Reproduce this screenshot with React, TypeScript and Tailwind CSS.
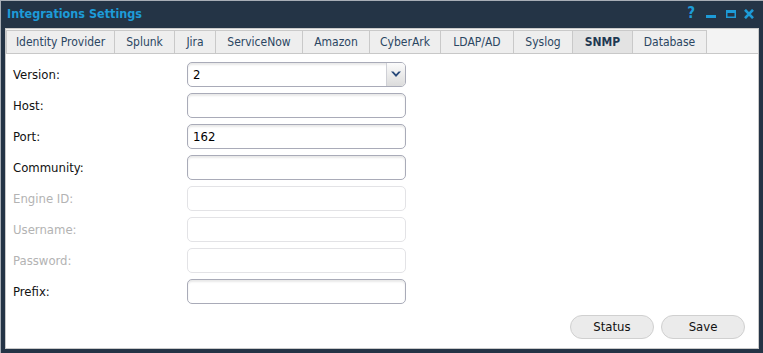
import React from "react";

const font = { fontFamily: '"DejaVu Sans Condensed", "DejaVu Sans", sans-serif' };

const tabs: { name: string; w: string; active?: boolean; last?: boolean }[] = [
  { name: "Identity Provider", w: "w-[108px]" },
  { name: "Splunk", w: "w-[60px]" },
  { name: "Jira", w: "w-[41px]" },
  { name: "ServiceNow", w: "w-[87px]" },
  { name: "Amazon", w: "w-[67px]" },
  { name: "CyberArk", w: "w-[71px]" },
  { name: "LDAP/AD", w: "w-[73px]" },
  { name: "Syslog", w: "w-[59px]" },
  { name: "SNMP", w: "w-[60px]", active: true },
  { name: "Database", w: "w-[75px]", last: true },
];

function Field({ label, value, disabled }: { label: string; value?: string; disabled?: boolean }) {
  return (
    <div className="flex items-center h-[25px]">
      <div className={`w-[174px] text-[13px] ${disabled ? "text-[#b3b3b3]" : "text-[#111]"}`}>{label}</div>
      <div
        className={`w-[219px] h-[25px] rounded-[5px] border flex items-center pl-[5px] text-[13px] text-black ${
          disabled
            ? "border-[#e3e3e6] bg-white"
            : "border-[#a9abb8] bg-white shadow-[inset_0_2px_2px_rgba(0,0,0,0.09)]"
        }`}
      >
        {value}
      </div>
    </div>
  );
}

export default function App() {
  return (
    <div
      style={font}
      className="w-[763px] h-[353px] bg-[#243446] border-t border-l border-[#a8aeb6] flex flex-col font-stretch-condensed"
    >
      {/* Title bar */}
      <div className="h-[27px] flex items-center pl-[6px] pr-[9px]">
        <div className="text-[12.5px] font-bold text-[#1d9bd8] leading-none">Integrations Settings</div>
        <div className="ml-auto flex items-center mb-[2px]">
          <span className="text-[15px] font-bold text-[#1d9bd8] leading-none">?</span>
          <svg width="10" height="10" viewBox="0 0 10 10" className="ml-[11px]">
            <rect x="0" y="6" width="10" height="3" fill="#1d9bd8" />
          </svg>
          <svg width="10" height="10" viewBox="0 0 10 10" className="ml-[10px]">
            <rect x="0.75" y="1.75" width="8.5" height="6.5" fill="none" stroke="#1d9bd8" strokeWidth="1.5" />
            <rect x="0" y="1" width="10" height="3" fill="#1d9bd8" />
          </svg>
          <svg width="10" height="10" viewBox="0 0 10 10" className="ml-[8px]">
            <path d="M1 0.8 L9 9.2 M9 0.8 L1 9.2" stroke="#1d9bd8" strokeWidth="2.6" strokeLinecap="butt" />
          </svg>
        </div>
      </div>

      {/* Content */}
      <div className="flex-1 ml-[4px] mr-[4px] mb-[4px] bg-white border border-[#c9c9c9] flex flex-col">
        {/* Tab strip */}
        <div className="bg-[#f3f3f3] pt-[1px] border-b border-[#c8c8c8] flex">
          {tabs.map((t) => (
            <div
              key={t.name}
              className={`${t.w} h-[23px] flex items-center justify-center border-t border-l border-[#c9c9c9] text-[12px] ${
                t.last ? "border-r" : ""
              } ${t.active ? "bg-[#e3e3e3] font-bold text-[#1f3852]" : "bg-[#eeeeee] text-[#2b4662]"}`}
            >
              {t.name}
            </div>
          ))}
        </div>

        {/* Body */}
        <div className="flex-1 flex flex-col pl-[7px] pt-[8px]">
          <div className="flex flex-col gap-[6px]">
            <div className="flex items-center h-[25px]">
              <div className="w-[174px] text-[13px] text-[#111]">Version:</div>
              <div className="w-[219px] h-[25px] rounded-[5px] border border-[#a9abb8] flex shadow-[inset_0_2px_2px_rgba(0,0,0,0.09)] bg-white">
                <div className="flex-1 flex items-center pl-[5px] text-[13px] text-black">2</div>
                <div className="w-[19px] h-full border-l border-[#cfd0d6] rounded-r-[4px] bg-gradient-to-b from-[#fbfbfb] to-[#dcdcdc] flex items-center justify-center">
                  <svg width="10" height="7" viewBox="0 0 10 7">
                    <path d="M0 0.5 L5 6 L10 0.5 L7.6 0.5 L5 3.3 L2.4 0.5 Z" fill="#27497a" />
                  </svg>
                </div>
              </div>
            </div>
            <Field label="Host:" />
            <Field label="Port:" value="162" />
            <Field label="Community:" />
            <Field label="Engine ID:" disabled />
            <Field label="Username:" disabled />
            <Field label="Password:" disabled />
            <Field label="Prefix:" />
          </div>

          <div className="mt-auto flex justify-end gap-[7px] pr-[13px] pb-[9px]">
            <button className="w-[84px] h-[24px] rounded-full border border-[#d0d0d0] bg-[#ebebeb] text-[13px] text-[#111]">
              Status
            </button>
            <button className="w-[84px] h-[24px] rounded-full border border-[#d0d0d0] bg-[#ebebeb] text-[13px] text-[#111]">
              Save
            </button>
          </div>
        </div>
      </div>
    </div>
  );
}
